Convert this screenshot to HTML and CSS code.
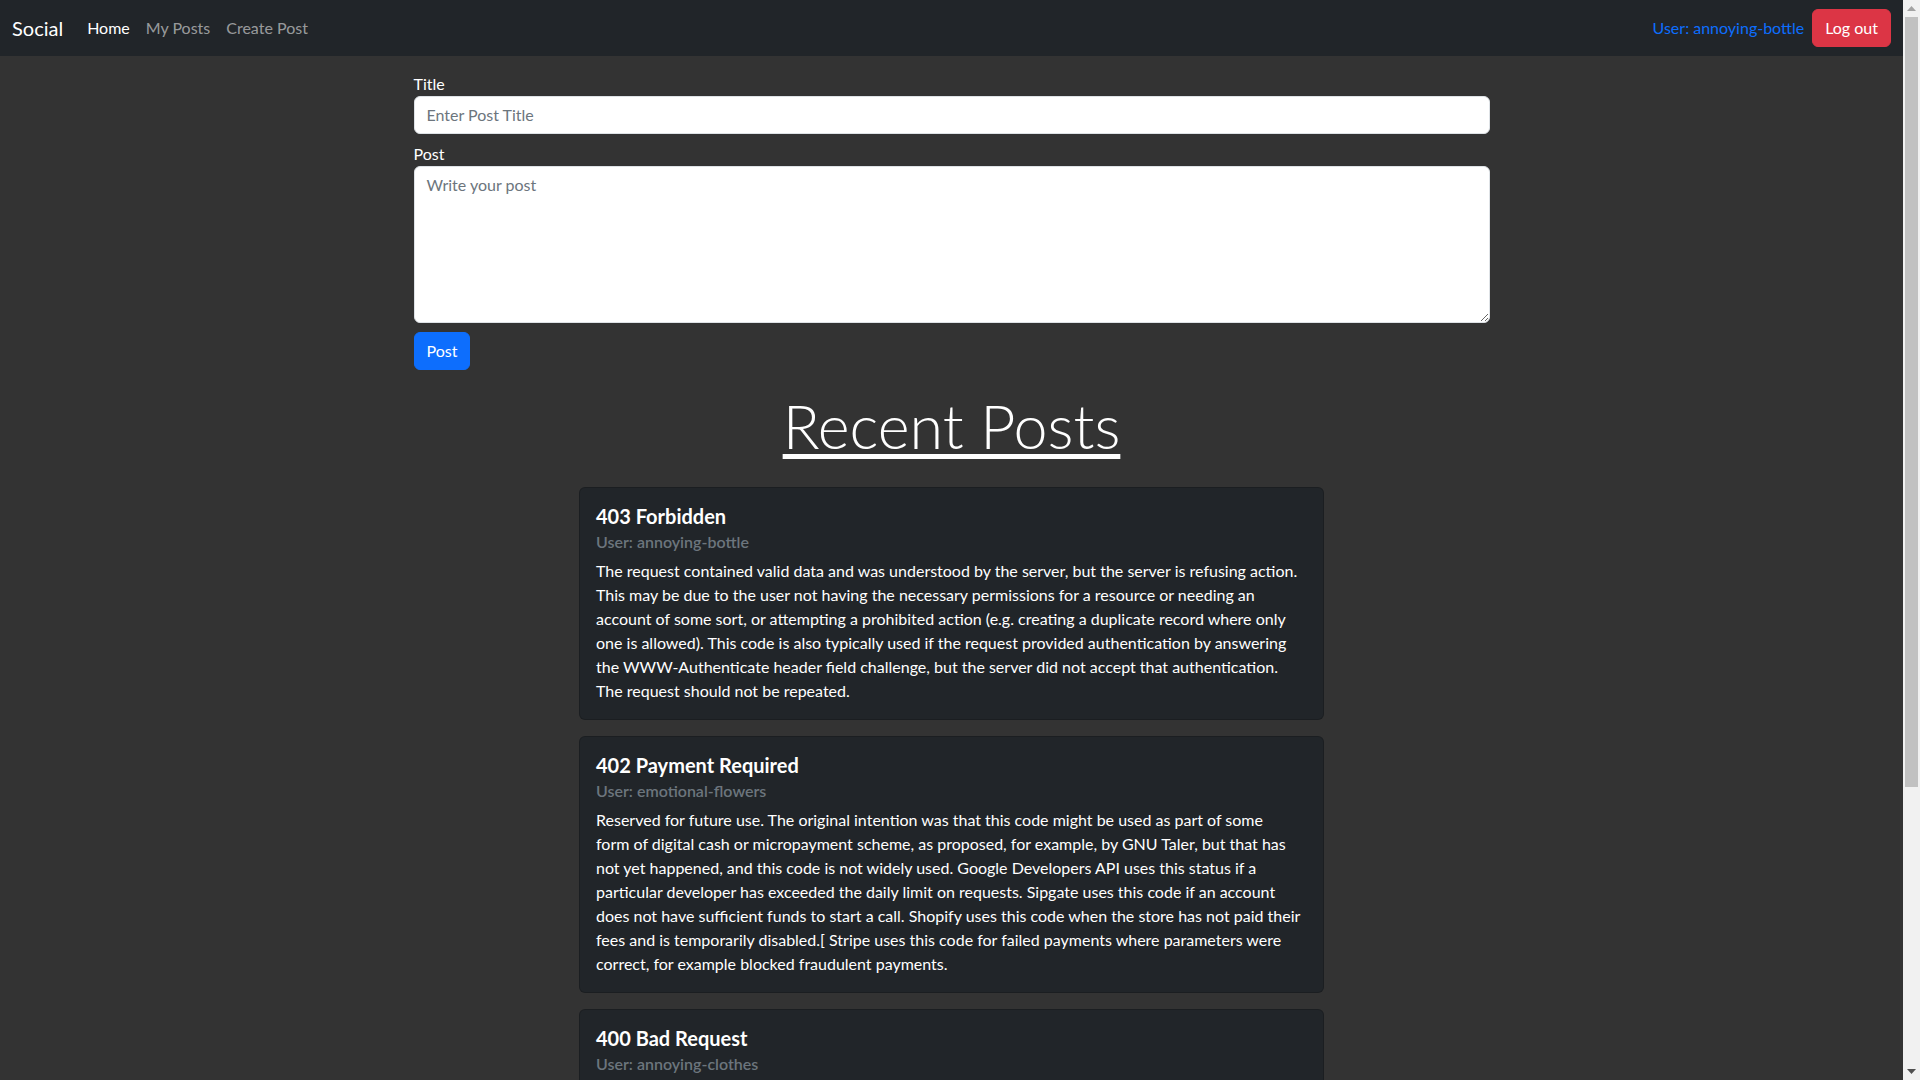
FILE: index.html
```html
<!DOCTYPE html>
<html lang="en">
<head>
<meta charset="utf-8">
<title>Social</title>
<link rel="stylesheet" href="styles.css">
</head>
<body>
<nav class="navbar">
  <a class="brand" href="#">Social</a>
  <ul class="nav">
    <li><a class="nav-link active" href="#">Home</a></li>
    <li><a class="nav-link" href="#">My Posts</a></li>
    <li><a class="nav-link" href="#">Create Post</a></li>
  </ul>
  <div class="nav-right">
    <a class="user-link" href="#">User: annoying-bottle</a>
    <button class="btn btn-danger" type="button">Log out</button>
  </div>
</nav>

<main class="main">
  <form class="post-form">
    <label class="form-label" for="title">Title</label>
    <input class="form-control" id="title" type="text" placeholder="Enter Post Title">
    <label class="form-label label-post" for="post">Post</label>
    <textarea class="form-control textarea" id="post" rows="6" placeholder="Write your post"></textarea>
    <div class="form-actions">
      <button class="btn btn-primary" type="button">Post</button>
    </div>
  </form>

  <h1 class="section-title"><span class="underlined">Recent Posts</span></h1>

  <section class="posts">
    <article class="card">
      <h5 class="card-title">403 Forbidden</h5>
      <h6 class="card-subtitle">User: annoying-bottle</h6>
      <p class="card-text">The request contained valid data and was understood by the server, but the server is refusing action.<br>This may be due to the user not having the necessary permissions for a resource or needing an<br>account of some sort, or attempting a prohibited action (e.g. creating a duplicate record where only<br>one is allowed). This code is also typically used if the request provided authentication by answering<br>the WWW-Authenticate header field challenge, but the server did not accept that authentication.<br>The request should not be repeated.</p>
    </article>
    <article class="card">
      <h5 class="card-title">402 Payment Required</h5>
      <h6 class="card-subtitle">User: emotional-flowers</h6>
      <p class="card-text">Reserved for future use. The original intention was that this code might be used as part of some<br>form of digital cash or micropayment scheme, as proposed, for example, by GNU Taler, but that has<br>not yet happened, and this code is not widely used. Google Developers API uses this status if a<br>particular developer has exceeded the daily limit on requests. Sipgate uses this code if an account<br>does not have sufficient funds to start a call. Shopify uses this code when the store has not paid their<br>fees and is temporarily disabled.[ Stripe uses this code for failed payments where parameters were<br>correct, for example blocked fraudulent payments.</p>
    </article>
    <article class="card">
      <h5 class="card-title">400 Bad Request</h5>
      <h6 class="card-subtitle">User: annoying-clothes</h6>
      <p class="card-text">The server cannot or will not process the request due to an apparent client error (e.g., malformed request syntax, size too large, invalid request message framing, or deceptive request routing).</p>
    </article>
  </section>
</main>

<div class="scrollbar" aria-hidden="true">
  <div class="sb-arrow sb-up">
    <svg width="9" height="5" viewBox="0 0 9 5"><path d="M0 5 L4.5 0 L9 5 Z" fill="#a3a3a3"/></svg>
  </div>
  <div class="sb-track">
    <div class="sb-thumb"></div>
  </div>
  <div class="sb-arrow sb-down">
    <svg width="9" height="5" viewBox="0 0 9 5"><path d="M0 0 L4.5 5 L9 0 Z" fill="#505050"/></svg>
  </div>
</div>
</body>
</html>
```

FILE: styles.css
```css
* { box-sizing: border-box; }

html {
  background: #333333;
  scrollbar-width: none;
}
html::-webkit-scrollbar { display: none; }

body {
  margin: 0 17px 0 0;
  min-height: 1467px;
  background: #333333;
  color: #ffffff;
  font-family: "Segoe UI", "Lato", "Liberation Sans", sans-serif;
  font-size: 16px;
  line-height: 1.5;
}

a { text-decoration: none; }

/* Scrollbar overlay (window chrome) */
.scrollbar {
  position: fixed;
  top: 0;
  right: 0;
  width: 17px;
  height: 100vh;
  background: #f1f1f1;
  display: flex;
  flex-direction: column;
}
.sb-arrow {
  height: 17px;
  flex: none;
  display: flex;
  align-items: center;
  justify-content: center;
}
.sb-track {
  flex: 1;
  padding: 0 2px;
}
.sb-thumb {
  height: 770px;
  background: #c1c1c1;
}

/* Navbar */
.navbar {
  display: flex;
  align-items: center;
  height: 56px;
  padding: 8px 12px;
  background: #212529;
}
.brand {
  font-size: 20px;
  line-height: 30px;
  color: #ffffff;
  margin-right: 16px;
}
.nav {
  display: flex;
  list-style: none;
  margin: 0;
  padding: 0;
}
.nav-link {
  display: block;
  padding: 8px;
  color: rgba(255, 255, 255, 0.55);
}
.nav-link.active { color: #ffffff; }
.nav-right {
  margin-left: auto;
  display: flex;
  align-items: center;
  gap: 8px;
}
.user-link { color: #0d6efd; }

.btn {
  font-family: inherit;
  font-size: 16px;
  line-height: 24px;
  padding: 6px 12px;
  border: 1px solid transparent;
  border-radius: 6px;
  color: #ffffff;
  cursor: pointer;
}
.btn-danger { background: #dc3545; border-color: #dc3545; }
.btn-primary { background: #0d6efd; border-color: #0d6efd; }

/* Form */
.main {
  padding-top: 16px;
}
.post-form {
  width: 1076px;
  margin: 0 auto;
  display: flex;
  flex-direction: column;
  align-items: stretch;
}
.form-label {
  display: block;
  margin: 0;
  line-height: 24px;
}
.label-post { margin-top: 8px; }
.form-control {
  display: block;
  width: 100%;
  font-family: inherit;
  font-size: 16px;
  line-height: 24px;
  padding: 6px 12px;
  color: #212529;
  background: #ffffff;
  border: 1px solid #dee2e6;
  border-radius: 6px;
}
.form-control::placeholder { color: #6c757d; }
.textarea {
  height: 157px;
  resize: vertical;
}
.form-actions {
  display: flex;
  margin-top: 9px;
}

/* Heading */
.section-title {
  margin: 18px 0 23px;
  text-align: center;
  font-size: 61px;
  font-weight: 300;
  line-height: 76px;
}
.underlined {
  text-decoration: underline;
  text-decoration-thickness: 5px;
  text-underline-offset: 5px;
}

/* Cards */
.posts {
  width: 745px;
  margin: 0 auto;
  display: flex;
  flex-direction: column;
  gap: 16px;
}
.card {
  background: #212529;
  border: 1px solid rgba(0, 0, 0, 0.175);
  border-radius: 6px;
  padding: 16px;
}
.card-title {
  margin: 0 0 8px;
  font-size: 20px;
  font-weight: 700;
  line-height: 1.2;
}
.card-subtitle {
  margin: -4px 0 8px;
  font-size: 16px;
  font-weight: 600;
  line-height: 1.2;
  color: #6c757d;
}
.card-text {
  margin: 0;
}
```
